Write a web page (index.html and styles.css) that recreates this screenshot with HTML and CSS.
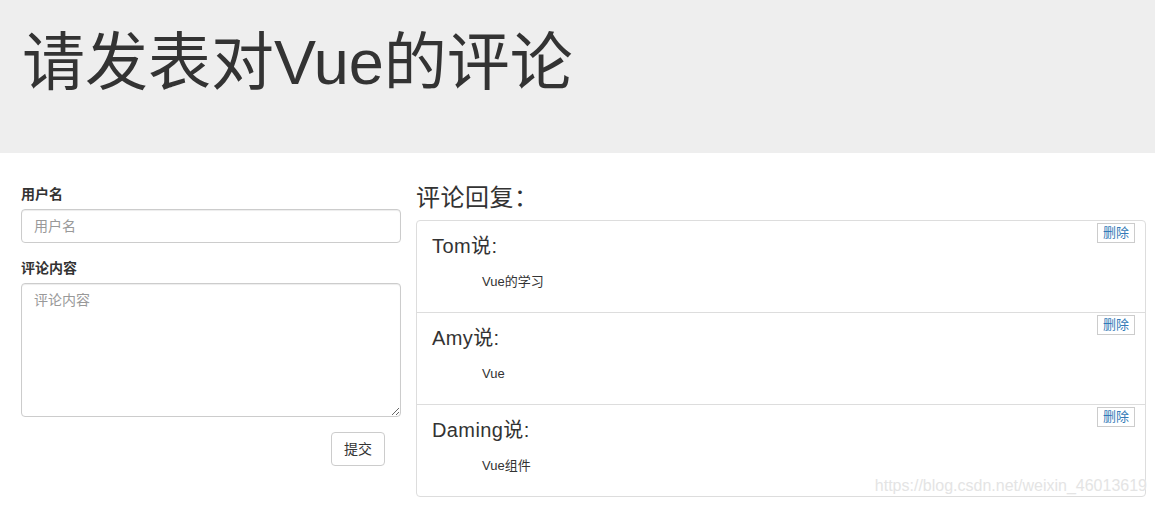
FILE: index.html
```html
<!DOCTYPE html>
<html lang="zh-CN">
<head>
<meta charset="utf-8">
<title>评论</title>
<link rel="stylesheet" href="styles.css">
</head>
<body>
<div class="jumbotron">
  <h1 class="title">请发表对Vue的评论</h1>
</div>
<div class="main">
  <form class="form">
    <div class="form-group">
      <label class="label">用户名</label>
      <input class="control" type="text" placeholder="用户名">
    </div>
    <div class="form-group">
      <label class="label">评论内容</label>
      <textarea class="control area" placeholder="评论内容"></textarea>
    </div>
    <div class="actions">
      <button type="button" class="btn">提交</button>
    </div>
  </form>
  <div class="replies">
    <h3 class="replies-title">评论回复：</h3>
    <ul class="list">
      <li class="item">
        <button type="button" class="del">删除</button>
        <h4 class="who">Tom说:</h4>
        <p class="text">Vue的学习</p>
      </li>
      <li class="item">
        <button type="button" class="del">删除</button>
        <h4 class="who">Amy说:</h4>
        <p class="text">Vue</p>
      </li>
      <li class="item">
        <button type="button" class="del">删除</button>
        <h4 class="who">Daming说:</h4>
        <p class="text">Vue组件</p>
      </li>
    </ul>
  </div>
</div>
<div class="watermark">https://blog.csdn.net/weixin_46013619</div>
</body>
</html>
```
FILE: styles.css
```css
* { box-sizing: border-box; }
html, body {
  margin: 0;
  padding: 0;
}
body {
  font-family: "Liberation Sans", "Noto Sans CJK SC", sans-serif;
  font-size: 14px;
  line-height: 1.42857;
  color: #333;
  background: #fff;
  position: relative;
  height: 505px;
  overflow: hidden;
}
.jumbotron {
  background: #eee;
  height: 153px;
  padding: 27px 22px 0;
  margin-bottom: 31px;
}
.title {
  margin: 0;
  font-size: 63px;
  font-weight: 400;
  line-height: 70px;
  color: #333;
}
.main {
  display: flex;
  gap: 15px;
  padding: 0 9px 0 21px;
}
.form {
  width: 380px;
  flex: none;
}
.form-group {
  margin-bottom: 15px;
}
.label {
  display: block;
  font-weight: 700;
  font-size: 14px;
  line-height: 20px;
  margin-bottom: 5px;
}
.control {
  display: block;
  width: 100%;
  height: 34px;
  padding: 6px 12px;
  font-family: inherit;
  font-size: 14px;
  line-height: 20px;
  color: #555;
  background: #fff;
  border: 1px solid #ccc;
  border-radius: 4px;
  box-shadow: inset 0 1px 1px rgba(0,0,0,.075);
}
.control::placeholder { color: #999; }
.area {
  height: 134px;
  resize: vertical;
}
.actions {
  display: flex;
  justify-content: flex-end;
  padding-right: 16px;
}
.btn {
  height: 34px;
  padding: 6px 12px;
  font-family: inherit;
  font-size: 14px;
  line-height: 20px;
  color: #333;
  background: #fff;
  border: 1px solid #ccc;
  border-radius: 4px;
}
.replies {
  flex: 1;
  min-width: 0;
}
.replies-title {
  margin: 0 0 9px;
  font-size: 24px;
  font-weight: 400;
  line-height: 27px;
  letter-spacing: 0.5px;
}
.list {
  list-style: none;
  margin: 0;
  padding: 0;
  border: 1px solid #ddd;
  border-radius: 4px;
}
.item {
  position: relative;
  height: 92px;
  padding: 14px 15px 0;
  border-top: 1px solid #ddd;
}
.item:first-child {
  border-top: none;
  height: 91px;
}
.item:first-child .del { top: 2px; }
.del {
  position: absolute;
  top: 2px;
  right: 10px;
  height: 20px;
  padding: 0 5px;
  font-family: inherit;
  font-size: 13px;
  line-height: 18px;
  color: #337ab7;
  background: #fff;
  border: 1px solid #ccc;
  border-radius: 0;
}
.who {
  margin: 0;
  font-size: 20px;
  font-weight: 400;
  line-height: 22px;
  letter-spacing: 0.4px;
}
.text {
  margin: 16px 0 0 50px;
  font-size: 13px;
  line-height: 17px;
}
.watermark {
  position: absolute;
  right: 8px;
  top: 476px;
  font-size: 16px;
  line-height: 20px;
  color: #e4e4e4;
  text-shadow: 0 0 1px #fff;
  pointer-events: none;
}
```
